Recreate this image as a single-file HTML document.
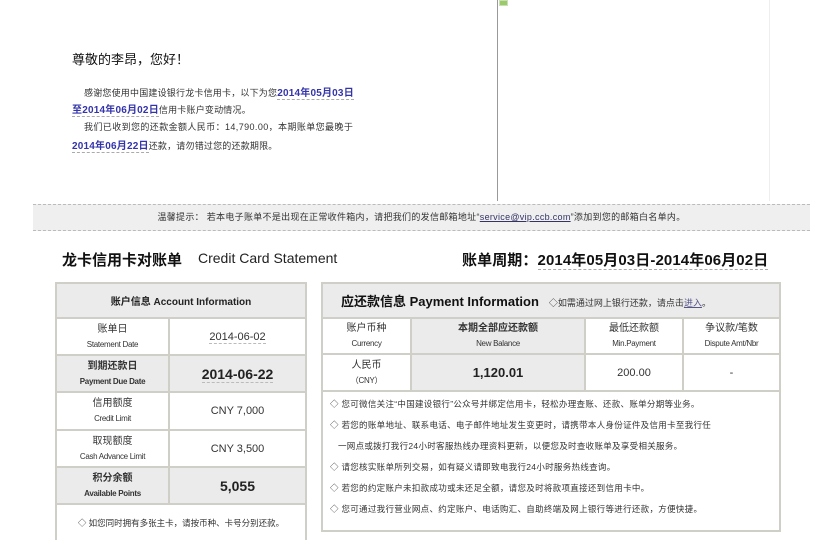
<!DOCTYPE html>
<html><head><meta charset="utf-8"><style>
*{margin:0;padding:0;box-sizing:border-box}
body{width:828px;height:533px;background:#fff;position:relative;overflow:hidden;font-family:"Liberation Sans","Noto Sans CJK SC",sans-serif;color:#222}
.a{position:absolute;white-space:nowrap}
.s{font-size:9px;color:#333}
.b{color:#3333aa;font-weight:bold;font-size:10px;border-bottom:1px dashed #aaa}
table{position:absolute;border-collapse:collapse}
td{border:2px solid #cfcfc8;text-align:center;vertical-align:middle;padding:0}
.g{background:#ebebeb}
.cn{font-size:10px;color:#333;line-height:16px}
.en{font-size:8px;color:#333;line-height:14px;letter-spacing:-0.3px}
.v{font-size:11px;color:#333}
.notes{text-align:left;font-size:8.5px;color:#333;vertical-align:top}
</style></head><body>
<div class="a" style="left:497px;top:0;width:1px;height:201px;background:#999"></div>
<div class="a" style="left:769px;top:0;width:1px;height:201px;background:#eee"></div>
<div class="a" style="left:499px;top:0;width:9px;height:6px;background:#9c6;border:1px solid #cdb"></div>
<div class="a" style="left:72px;top:49px;font-size:13px;color:#111">尊敬的李昂，您好！</div>
<div class="a s" style="left:84px;top:84px;letter-spacing:0.2px">感谢您使用中国建设银行龙卡信用卡，以下为您<span class="b">2014年05月03日</span></div>
<div class="a s" style="left:72px;top:101px;letter-spacing:0.2px"><span class="b">至2014年06月02日</span>信用卡账户变动情况。</div>
<div class="a s" style="left:84px;top:120px;letter-spacing:0.4px">我们已收到您的还款金额人民币：14,790.00，本期账单您最晚于</div>
<div class="a s" style="left:72px;top:137px;letter-spacing:0.2px"><span class="b">2014年06月22日</span>还款，请勿错过您的还款期限。</div>
<div class="a" style="left:33px;top:204px;width:777px;height:27px;background:#efefef;border-top:1px dashed #bbb;border-bottom:1px dashed #bbb;font-size:9px;color:#333;text-align:center;line-height:25px;letter-spacing:0.3px">温馨提示： 若本电子账单不是出现在正常收件箱内，请把我们的发信邮箱地址“<span style="color:#336;text-decoration:underline">service@vip.ccb.com</span>”添加到您的邮箱白名单内。</div>
<div class="a" style="left:62px;top:249px;font-size:15px;font-weight:bold;color:#111">龙卡信用卡对账单</div>
<div class="a" style="left:198px;top:250px;font-size:14px;color:#222">Credit Card Statement</div>
<div class="a" style="left:462px;top:249px;font-size:15px;font-weight:bold;color:#111;letter-spacing:0.1px">账单周期：<span style="border-bottom:1px dashed #aaa">2014年05月03日-2014年06月02日</span></div>

<table style="left:55px;top:282px;width:252px">
<tr style="height:35px"><td colspan="2" class="g" style="font-size:10px;font-weight:bold">账户信息 Account Information</td></tr>
<tr style="height:37px"><td style="width:113px"><div class="cn">账单日</div><div class="en">Statement Date</div></td><td class="v"><span style="border-bottom:1px dashed #bbb">2014-06-02</span></td></tr>
<tr style="height:37px"><td class="g"><div class="cn" style="font-weight:bold">到期还款日</div><div class="en" style="font-weight:bold">Payment Due Date</div></td><td class="g" style="font-size:14px;font-weight:bold"><span style="border-bottom:1px dashed #bbb">2014-06-22</span></td></tr>
<tr style="height:38px"><td><div class="cn">信用额度</div><div class="en">Credit Limit</div></td><td class="v">CNY 7,000</td></tr>
<tr style="height:37px"><td><div class="cn">取现额度</div><div class="en">Cash Advance Limit</div></td><td class="v">CNY 3,500</td></tr>
<tr style="height:37px"><td class="g"><div class="cn" style="font-weight:bold">积分余额</div><div class="en" style="font-weight:bold">Available Points</div></td><td class="g" style="font-size:14px;font-weight:bold">5,055</td></tr>
<tr style="height:36px"><td colspan="2" style="font-size:8.5px;color:#333;border-bottom:none">◇ 如您同时拥有多张主卡，请按币种、卡号分别还款。</td></tr>
</table>

<table style="left:321px;top:282px;width:460px">
<tr style="height:35px"><td colspan="4" class="g" style="text-align:left;padding-left:18px"><span style="font-size:13px;font-weight:bold;color:#111">应还款信息 Payment Information</span><span style="font-size:9px;color:#333;margin-left:10px">◇如需通过网上银行还款，请点击<u style="color:#558">进入</u>。</span></td></tr>
<tr style="height:36px"><td style="width:89px"><div class="cn">账户币种</div><div class="en">Currency</div></td><td class="g" style="width:174px"><div class="cn" style="font-weight:bold">本期全部应还款额</div><div class="en">New Balance</div></td><td style="width:98px"><div class="cn">最低还款额</div><div class="en">Min.Payment</div></td><td><div class="cn">争议款/笔数</div><div class="en">Dispute Amt/Nbr</div></td></tr>
<tr style="height:37px"><td><div class="cn">人民币</div><div class="en">（CNY）</div></td><td class="g" style="font-size:13px;font-weight:bold">1,120.01</td><td class="v">200.00</td><td class="v">-</td></tr>
<tr style="height:140px"><td colspan="4" class="notes" style="padding:2px 0 0 7px;line-height:21px;letter-spacing:0.3px">
◇ 您可微信关注“中国建设银行”公众号并绑定信用卡，轻松办理查账、还款、账单分期等业务。<br>
<span style="line-height:18px">◇ 若您的账单地址、联系电话、电子邮件地址发生变更时，请携带本人身份证件及信用卡至我行任<br>&nbsp;&nbsp;&nbsp;一网点或拨打我行24小时客服热线办理资料更新，以便您及时查收账单及享受相关服务。</span><br>
◇ 请您核实账单所列交易，如有疑义请即致电我行24小时服务热线查询。<br>
◇ 若您的约定账户未扣款成功或未还足全额，请您及时将款项直接还到信用卡中。<br>
◇ 您可通过我行营业网点、约定账户、电话购汇、自助终端及网上银行等进行还款，方便快捷。
</td></tr>
</table>
</body></html>
